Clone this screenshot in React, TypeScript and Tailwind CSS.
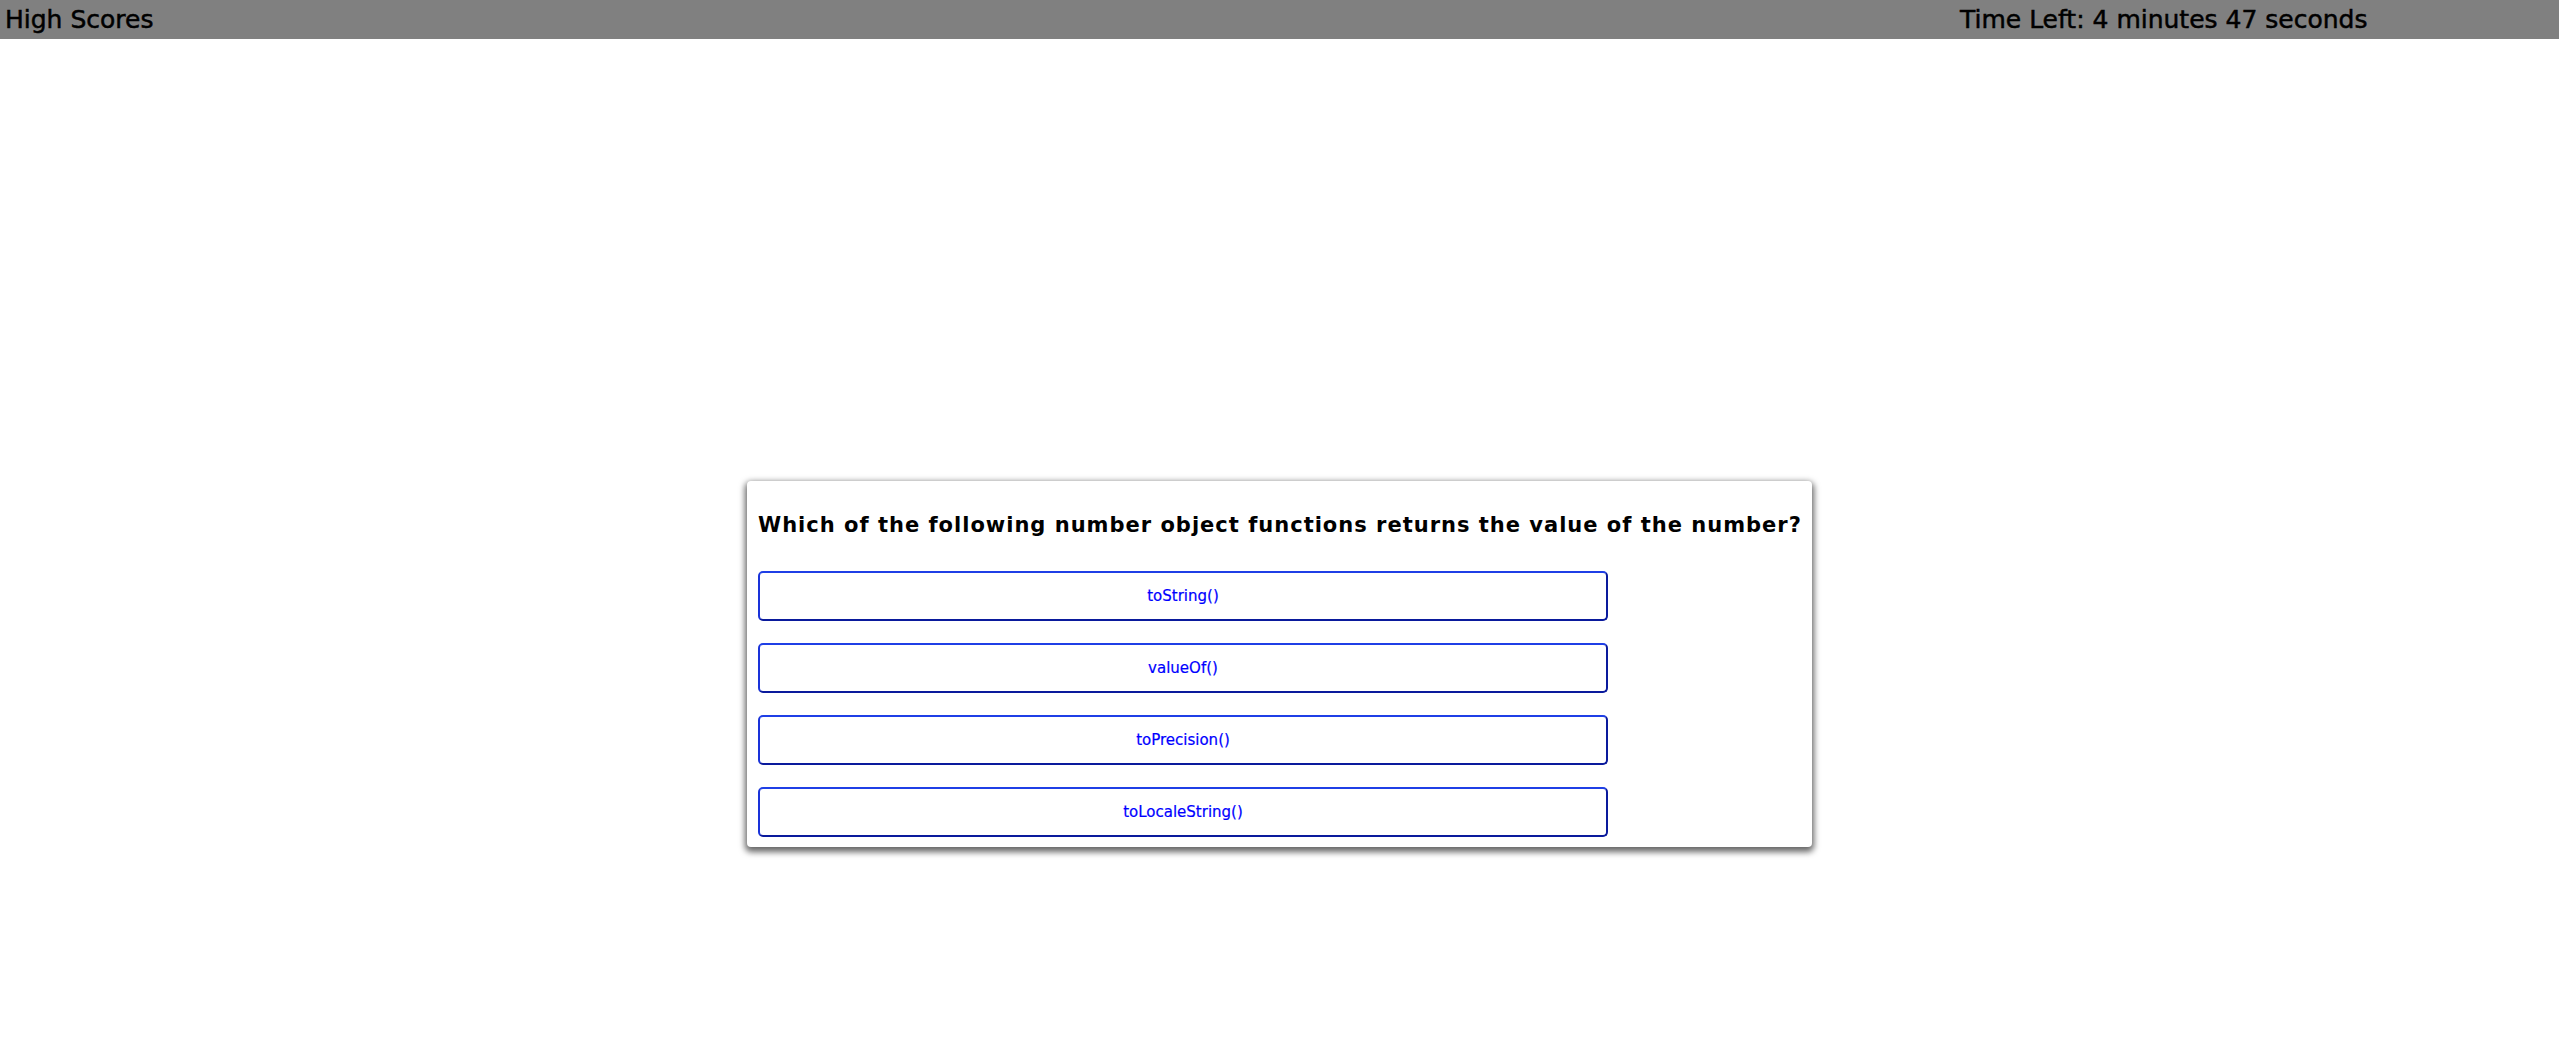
import React from "react";

const choices = ["toString()", "valueOf()", "toPrecision()", "toLocaleString()"];

const App: React.FC = () => {
  return (
    <div className="min-h-[1040px] bg-white font-['DejaVu_Sans',sans-serif] text-black">
      {/* Top bar */}
      <header className="flex h-[39px] items-center bg-[#808080] pl-[5px] text-[25px] leading-[28px] [-webkit-text-stroke:0.5px_black]">
        <span>High Scores</span>
        <span className="ml-auto w-[599px]">Time Left: 4 minutes 47 seconds</span>
      </header>

      {/* Question card */}
      <div className="mx-auto mt-[442px] w-[1065px] rounded-[4px] bg-white px-[11px] pt-[10px] pb-[10px] shadow-[0px_3px_6px_2px_rgba(0,0,0,0.6)]">
        <h2 className="mt-[22px] mb-[34px] whitespace-nowrap text-[21px] font-bold leading-[24px] tracking-[1px]">
          Which of the following number object functions returns the value of the number?
        </h2>
        <div className="flex flex-col gap-[22px]">
          {choices.map((c) => (
            <button
              key={c}
              className="h-[50px] w-[850px] rounded-[5px] border-2 border-t-[#1f3fe6] border-l-[#1a33d9] border-r-[#0a1a9c] border-b-[#0a1a9c] bg-white text-[15px] text-[#0000ff] [-webkit-text-stroke:0.2px_#0000ff]"
            >
              {c}
            </button>
          ))}
        </div>
      </div>
    </div>
  );
};

export default App;
